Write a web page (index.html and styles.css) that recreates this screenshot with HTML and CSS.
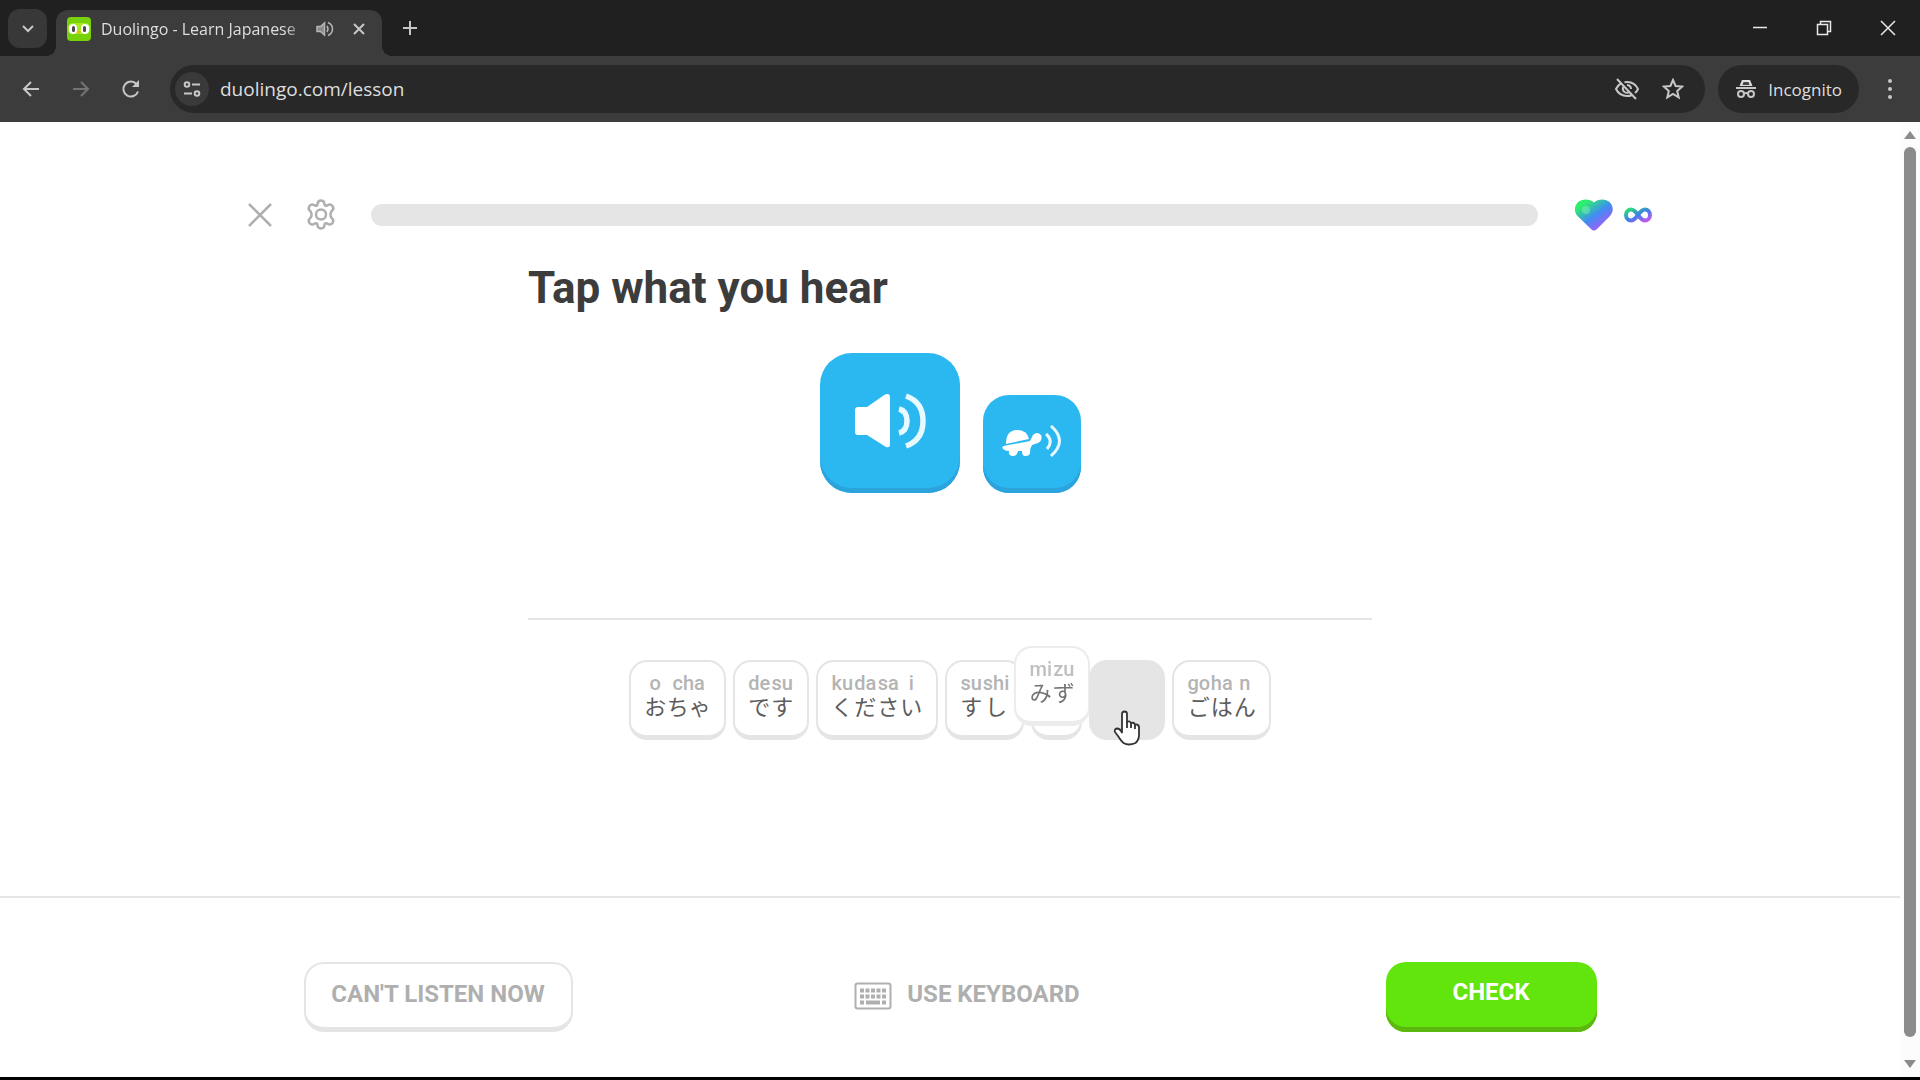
FILE: index.html
```html
<!DOCTYPE html>
<html lang="en">
<head>
    <meta charset="UTF-8">
    <title>Duolingo - Learn Japanese</title>
    <link rel="stylesheet" href="styles.css">
</head>

<body>
    <div class="tabstrip">
        <button class="tab-search" aria-label="Search tabs">
            <svg width="14" height="10" viewBox="0 0 14 10"><path d="M2 2l5 5 5-5" class="line"/></svg>
        </button>
        <div class="tab">
            <svg class="favicon" width="24" height="24" viewBox="0 0 24 24">
                <rect width="24" height="24" rx="4" fill="#78d20a"/>
                <rect x="1" y="6" width="22" height="11" rx="5" fill="#a4ea1c"/>
                <rect x="2" y="7" width="8" height="10" rx="4" fill="#fff"/>
                <rect x="14" y="7" width="8" height="10" rx="4" fill="#fff"/>
                <rect x="5" y="9" width="3" height="6" rx="1.5" fill="#4b4b4b"/>
                <rect x="16" y="9" width="3" height="6" rx="1.5" fill="#4b4b4b"/>
                <path d="M10 14h4l-2 3z" fill="#ffb100"/>
            </svg>
            <span class="tab-title">Duolingo - Learn Japanese</span>
            <svg class="tab-audio" width="18" height="18" viewBox="0 0 18 18">
                <path d="M1 6.500h3.500L8.500 3v12l-4-3.500H1z" fill="#8a8a8a" stroke="#b5b5b5" stroke-width="1.500"/>
                <path d="M11 6q2 3 0 6M12 2.500q4.500 2 4.500 6.500T12 15.500" fill="none" stroke="#b5b5b5" stroke-width="1.500"/>
            </svg>
            <button class="tab-close" aria-label="Close tab">
                <svg width="14" height="14" viewBox="0 0 14 14"><path d="M2 2l10 10M12 2L2 12" class="line"/></svg>
            </button>
        </div>
        <button class="new-tab" aria-label="New tab">
            <svg width="16" height="16" viewBox="0 0 16 16"><path d="M8 1v14M1 8h14" class="line"/></svg>
        </button>
        <div class="window-buttons">
            <button aria-label="Minimize"><svg width="16" height="16" viewBox="0 0 16 16"><path d="M1 7.500h14" class="thin"/></svg></button>
            <button aria-label="Restore"><svg width="16" height="16" viewBox="0 0 16 16"><path d="M1.500 4.500h10v10h-10zM4.500 4V1.500h10v10H12" class="thin"/></svg></button>
            <button aria-label="Close"><svg width="16" height="16" viewBox="0 0 16 16"><path d="M1 1l14 14M15 1L1 15" class="thin"/></svg></button>
        </div>
    </div>

    <div class="toolbar">
        <button class="nav" aria-label="Back"><svg width="20" height="20" viewBox="0 0 20 20"><path d="M18 10H3M10 3l-7 7 7 7" class="line"/></svg></button>
        <button class="nav disabled" aria-label="Forward"><svg width="20" height="20" viewBox="0 0 20 20"><path d="M2 10h15M10 3l7 7-7 7" class="line"/></svg></button>
        <button class="nav" aria-label="Reload"><svg width="20" height="20" viewBox="0 0 20 20"><path d="M17 12.500A7.500 7.500 0 1 1 15.500 5L17 7" class="line"/><path d="M18 1v7h-7z" fill="#c7c7c7"/></svg></button>
        <div class="omnibox">
            <button class="site-info" aria-label="Site information">
                <svg width="18" height="16" viewBox="0 0 18 16"><circle cx="4" cy="3.500" r="2.300" class="line"/><path d="M9 3.500h8M1 12.500h8" class="line"/><circle cx="14" cy="12.500" r="2.300" class="line"/></svg>
            </button>
            <input class="url" type="text" aria-label="Address" value="duolingo.com/lesson">
            <button class="omni-icon" aria-label="Third-party cookies blocked">
                <svg width="26" height="22" viewBox="0 0 26 22"><path d="M7.500 4.800Q4 7 2 11q3.500 7 11 7 2.500 0 4.500-.8M10.500 4.200Q20 2.500 24 11q-1 2.300-3 4M10 8q-2.500 3.500.5 6 2 1.200 4 .5M13 7q4 .5 4 4M3 1l19 20" class="line"/></svg>
            </button>
            <button class="omni-icon" aria-label="Bookmark">
                <svg width="22" height="22" viewBox="0 0 22 22"><path d="M11 2l2.600 6 6.600.6-5 4.400 1.500 6.400L11 16l-5.700 3.400L6.800 13l-5-4.400 6.600-.6z" class="line"/></svg>
            </button>
        </div>
        <button class="incognito">
            <svg width="22" height="20" viewBox="0 0 22 20"><path d="M4.500 7L7 1h8l2.500 6z" fill="#dedede"/><path d="M8.500 3h5l1 3h-7z" fill="#454545"/><path d="M1 9h20" class="line"/><circle cx="6" cy="15" r="3" class="line"/><circle cx="16" cy="15" r="3" class="line"/><path d="M9 14.500q2-1 4 0" class="line"/></svg>
            Incognito
        </button>
        <button class="menu" aria-label="Menu"><svg width="6" height="22" viewBox="0 0 6 22" fill="#c7c7c7"><circle cx="3" cy="3" r="2"/><circle cx="3" cy="11" r="2"/><circle cx="3" cy="19" r="2"/></svg></button>
    </div>

    <div class="viewport">
        <div class="page">
            <header class="lesson-header">
                <button aria-label="Quit"><svg width="24" height="24" viewBox="0 0 24 24"><path d="M1 1l22 22M23 1L1 23" class="grey-line"/></svg></button>
                <button aria-label="Settings">
                    <svg width="32" height="32" viewBox="0 0 32 32">
                        <path d="M12.500 5.200Q12.700 1.500 16 1.500t3.500 3.700q.3 2 2.500 1.300 3.500-2.200 5.600.6 1.800 3.300-1.200 5.200Q24.500 16 26.400 18.700q3 2 1.200 5.200-2.100 2.800-5.600.6-2.200-.7-2.500 1.300-.2 3.700-3.500 3.700t-3.500-3.700q-.3-2-2.500-1.300-3.500 2.200-5.600-.6-1.800-3.200 1.200-5.200 1.900-2.700 0-6.400-3-1.900-1.200-5.200 2.100-2.800 5.600-.6 2.200.7 2.500-1.300z" class="grey-line"/>
                        <circle cx="16" cy="15.500" r="5" class="grey-line"/>
                    </svg>
                </button>
                <div class="progress" role="progressbar" aria-label="Lesson progress" aria-valuenow="0"></div>
                <div class="hearts">
                    <svg width="40" height="34" viewBox="0 0 40 34">
                        <defs>
                            <linearGradient id="heart" x1="0.1" y1="0.1" x2="0.8" y2="0.9">
                                <stop offset="0.1" stop-color="#2cf06c"/>
                                <stop offset="0.55" stop-color="#3f8df2"/>
                                <stop offset="1" stop-color="#b057f5"/>
                            </linearGradient>
                        </defs>
                        <path d="M20 4.500C24 .5 32 .5 36 4.500c4 4.500 3.500 10-.5 14L23 31q-3 3-6 0L4 18.500C0 14.500 0 9 3.500 4.500 8 .5 16 .5 20 4.500z" fill="url(#heart)"/>
                        <circle cx="12" cy="12" r="4" fill="#8dffb5" opacity="0.4"/>
                    </svg>
                    <svg width="28" height="16" viewBox="0 0 28 16">
                        <defs>
                            <linearGradient id="loop" x1="0" y1="0" x2="1" y2="1">
                                <stop offset="0" stop-color="#2de072"/>
                                <stop offset="0.5" stop-color="#3d7fea"/>
                                <stop offset="1" stop-color="#cc55ee"/>
                            </linearGradient>
                        </defs>
                        <path d="M14 8C11 3.700 9.500 2.500 7 2.500a5 5.500 0 0 0 0 11C9.500 13.500 11 12.300 14 8s4.500-5.500 7-5.500a5 5.500 0 0 1 0 11C18.500 13.500 17 12.300 14 8z" fill="none" stroke="url(#loop)" stroke-width="4"/>
                    </svg>
                </div>
            </header>

            <main class="challenge">
                <h1>Tap what you hear</h1>
                <div class="audio">
                    <button class="play" aria-label="Play">
                        <svg width="72" height="56" viewBox="0 0 72 56">
                            <path d="M1 17q0-3 3-3h9L31 1.500Q36 0 36 4v48q0 3-4 2L13 42H4q-3 0-3-3z" fill="#fff"/>
                            <path d="M45 16q8 2 8 12t-8 12M52 3q17 6 17 25T52 53" fill="none" stroke="#e8faff" stroke-width="5.500"/>
                        </svg>
                    </button>
                    <button class="play slow" aria-label="Play slowly">
                        <svg width="60" height="34" viewBox="0 0 60 34">
                            <path d="M4 19Q4 5 15 5q10 0 12 9z" fill="#fff"/>
                            <path d="M1 24q-2-3 3-3.500L28 16l3-6q4-4 8 0 2 5-3 8l-6 2q-2 3-2 8 0 3-5 3-3 0-3-5h-4q-1 5-5 5-5 0-4-5-4 0-6-2z" fill="#fff"/>
                            <path d="M44 9q8 7 1 15M49 1q17 15 0 30" fill="none" stroke="#e8faff" stroke-width="3"/>
                        </svg>
                    </button>
                </div>
                <div class="answer"></div>
                <div class="word-bank" lang="ja">
                    <button class="word"><span class="kana"><small>o</small>お</span><span class="kana"><small>cha</small>ちゃ</span></button>
                    <button class="word"><span class="kana"><small>de</small>で</span><span class="kana"><small>su</small>す</span></button>
                    <button class="word"><span class="kana"><small>ku</small>く</span><span class="kana"><small>da</small>だ</span><span class="kana"><small>sa</small>さ</span><span class="kana"><small>i</small>い</span></button>
                    <button class="word"><span class="kana"><small>su</small>す</span><span class="kana"><small>shi</small>し</span></button>
                    <div class="slot">
                        <button class="word moving"><span class="kana"><small>mi</small>み</span><span class="kana"><small>zu</small>ず</span></button>
                    </div>
                    <div class="slot used">
                        <svg class="cursor" width="28" height="36" viewBox="0 0 28 36">
                            <path d="M9 21V4q0-2.500 2.500-2.500T14 4v8q2.500-1.500 4 1 3-1 4 1.500 3.500-.5 4 2.500v8q0 5-3.500 8-7 3-12 0Q8 31 5 26l-3-4q-1-3 2-3.500 3 0 5 4z" fill="#fff" stroke="#333" stroke-width="1.800" stroke-linejoin="round"/>
                            <path d="M14 12v6M18 13v5M22 14.500V19" stroke="#333" stroke-width="1.800"/>
                        </svg>
                    </div>
                    <button class="word"><span class="kana"><small>go</small>ご</span><span class="kana"><small>ha</small>は</span><span class="kana"><small>n</small>ん</span></button>
                </div>
            </main>

            <footer class="lesson-footer">
                <div class="footer-inner">
                    <button class="skip">CAN'T LISTEN NOW</button>
                    <button class="keyboard">
                        <svg width="38" height="28" viewBox="0 0 38 28">
                            <rect x="1.500" y="1.500" width="35" height="25" rx="2" fill="none" stroke="#afafaf" stroke-width="2"/>
                            <path d="M6 8.500h26M6 14.500h26" stroke="#afafaf" stroke-width="4" stroke-dasharray="4 1.500"/>
                            <path d="M6 20.500h4M12 20.500h14M28 20.500h4" stroke="#afafaf" stroke-width="4"/>
                        </svg>
                        USE KEYBOARD
                    </button>
                    <button class="check">CHECK</button>
                </div>
            </footer>
        </div>
        <div class="scrollbar">
            <svg width="12" height="8" viewBox="0 0 12 8"><path d="M0 8l6-8 6 8z" fill="#8b8b8b"/></svg>
            <div class="thumb"></div>
            <svg width="12" height="8" viewBox="0 0 12 8"><path d="M0 0l6 8 6-8z" fill="#8b8b8b"/></svg>
        </div>
    </div>
</body>
</html>
```
FILE: styles.css
```css
* {
    box-sizing: border-box;
}

html, body {
    height: 100%;
    margin: 0;
}

body {
    display: flex;
    flex-flow: column;
    border-bottom: 3px solid #000;
    background: #fff;
    font-family: "Open Sans", "Noto Sans", "Noto Sans CJK JP", sans-serif;
    overflow: hidden;
}

button {
    display: flex;
    align-items: center;
    justify-content: center;
    margin: 0;
    padding: 0;
    border: 0;
    background: none;
    font-family: inherit;
}

svg {
    flex: none;
    display: block;
}

.line {
    fill: none;
    stroke: #c7c7c7;
    stroke-width: 2;
}

.thin {
    fill: none;
    stroke: #e8e8e8;
    stroke-width: 1.5;
}

.grey-line {
    fill: none;
    stroke: #afafaf;
    stroke-width: 2.5;
}

/* browser tabs */
.tabstrip {
    display: flex;
    flex: none;
    height: 56px;
    padding-left: 8px;
    background: #202020;
}

.tab-search {
    width: 39px;
    height: 39px;
    margin-top: 9px;
    border-radius: 12px;
    background: #383838;
}

.tab {
    position: relative;
    display: flex;
    align-items: center;
    width: 326px;
    margin: 10px 0 0 9px;
    padding: 0 16px 8px 11px;
    border-radius: 12px 12px 0 0;
    background: #3c3c3c;
}

.tab::before, .tab::after {
    content: "";
    position: absolute;
    bottom: 0;
    width: 10px;
    height: 10px;
}

.tab::before {
    left: -10px;
    background: radial-gradient(circle at 0 0, #202020 10px, #3c3c3c 10px);
}

.tab::after {
    right: -10px;
    background: radial-gradient(circle at 100% 0, #202020 10px, #3c3c3c 10px);
}

.tab-title {
    flex: 1;
    margin: 0 10px 0 10px;
    overflow: hidden;
    white-space: nowrap;
    font-size: 16px;
    line-height: 24px;
    color: #dedede;
    -webkit-mask-image: linear-gradient(to right, #000 90%, transparent);
    mask-image: linear-gradient(to right, #000 90%, transparent);
}

.tab-close {
    margin-left: 18px;
}

.new-tab {
    width: 40px;
    height: 56px;
    margin-left: 8px;
}

.window-buttons {
    display: flex;
    margin-left: auto;
}

.window-buttons button {
    width: 64px;
    height: 56px;
}

/* address bar */
.toolbar {
    display: flex;
    flex: none;
    align-items: center;
    height: 66px;
    padding: 0 15px 0 6px;
    background: #3c3c3c;
}

.nav {
    width: 50px;
    height: 48px;
}

.disabled {
    opacity: 0.4;
}

.omnibox {
    display: flex;
    flex: 1;
    align-items: center;
    height: 48px;
    margin-left: 14px;
    padding: 0 9px 0 5px;
    border-radius: 24px;
    background: #282828;
}

.site-info {
    width: 34px;
    height: 34px;
    border-radius: 17px;
    background: #3a3a3a;
}

.url {
    flex: 1;
    margin-left: 11px;
    padding: 0;
    border: 0;
    outline: 0;
    background: none;
    font-family: inherit;
    font-size: 19px;
    color: #dedede;
}

.omni-icon {
    width: 46px;
    height: 40px;
}

.incognito {
    gap: 11px;
    height: 48px;
    margin-left: 13px;
    padding: 0 17px;
    border-radius: 24px;
    background: #282828;
    font-size: 17px;
    color: #dedede;
}

.menu {
    width: 30px;
    height: 48px;
    margin-left: 16px;
}

/* page area */
.viewport {
    display: flex;
    flex: 1;
    min-height: 0;
}

.page {
    display: flex;
    flex: 1;
    flex-flow: column;
    font-family: Roboto, "Noto Sans CJK JP", sans-serif;
}

.scrollbar {
    display: flex;
    flex-flow: column;
    align-items: center;
    width: 20px;
    padding: 9px 0;
    background: #fcfcfc;
}

.thumb {
    flex: 1;
    width: 12px;
    margin: 8px 0 23px;
    border-radius: 6px;
    background: #8b8b8b;
}

.lesson-header {
    display: flex;
    align-items: center;
    width: 100%;
    max-width: 1404px;
    margin: 76px auto 0;
    height: 34px;
}

.lesson-header button + button {
    margin: 0 34px 0 33px;
}

.progress {
    flex: 1;
    height: 22px;
    border-radius: 11px;
    background: #e5e5e5;
}

.hearts {
    display: flex;
    align-items: center;
    gap: 10px;
    margin-left: 36px;
}

.challenge {
    flex: 1;
    width: 100%;
    max-width: 844px;
    margin: 0 auto;
}

h1 {
    margin: 28px 0 0;
    font-size: 44px;
    line-height: 56px;
    color: #3c3c3c;
}

.audio {
    display: flex;
    align-items: flex-end;
    justify-content: center;
    gap: 23px;
    margin-top: 37px;
}

.play {
    width: 140px;
    height: 140px;
    padding-bottom: 4px;
    border-radius: 32px;
    background: #2bb8f0;
    box-shadow: inset 0 -5px #2ba3dc;
}

.slow {
    width: 98px;
    height: 98px;
    border-radius: 26px;
}

.answer {
    height: 127px;
    border-bottom: 2px solid #e5e5e5;
}

.word-bank {
    display: flex;
    justify-content: center;
    gap: 7px;
    margin-top: 40px;
}

.word {
    align-items: flex-start;
    height: 80px;
    padding: 10px 13px;
    border: 2px solid #e5e5e5;
    border-bottom-width: 5px;
    border-radius: 18px;
    background: #fff;
    font-size: 22px;
    line-height: 22px;
    color: #5c5c5c;
}

.kana {
    display: flex;
    flex-flow: column;
    align-items: center;
    min-width: 23px;
    font-family: "Noto Sans CJK JP", sans-serif;
}

.kana small {
    font-family: Roboto, sans-serif;
    font-size: 20px;
    font-weight: 500;
    line-height: 22px;
    color: #b4b4b4;
}

.slot {
    position: relative;
    width: 51px;
    height: 80px;
    border: 2px solid #e5e5e5;
    border-bottom-width: 5px;
    border-radius: 18px;
}

.used {
    width: 76px;
    background: #e5e5e5;
}

.moving {
    position: absolute;
    top: -16px;
    left: -19px;
    border-color: #ececec;
}

.moving .kana {
    opacity: 0.85;
}

.cursor {
    position: absolute;
    top: 48px;
    left: 22px;
}

/* bottom bar */
.lesson-footer {
    height: 181px;
    padding-top: 64px;
    border-top: 2px solid #e5e5e5;
}

.footer-inner {
    display: flex;
    justify-content: space-between;
    max-width: 1293px;
    margin: 0 auto;
}

.footer-inner button {
    height: 70px;
    padding-bottom: 6px;
    font-size: 24px;
    font-weight: 700;
    color: #afafaf;
}

.footer-inner .skip {
    width: 269px;
    padding-bottom: 4px;
    border: 2px solid #e5e5e5;
    border-bottom-width: 5px;
    border-radius: 20px;
}

.footer-inner .keyboard {
    gap: 15px;
    padding-right: 24px;
}

.keyboard svg {
    margin-top: 4px;
}

.footer-inner .check {
    width: 211px;
    padding-bottom: 10px;
    border-radius: 20px;
    background: #61e50c;
    box-shadow: inset 0 -5px #5cb80e;
    color: #fff;
}
```
